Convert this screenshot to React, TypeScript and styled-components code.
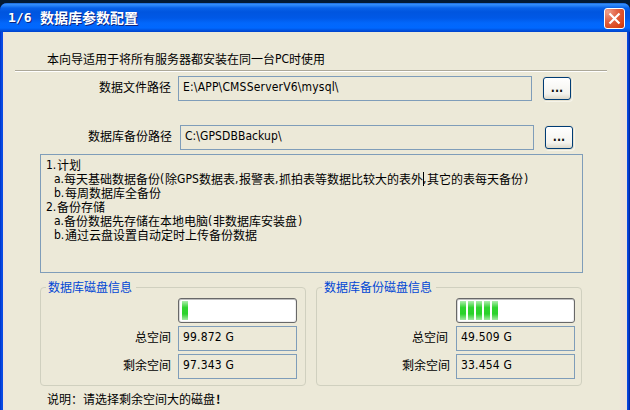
import React from "react";
import styled, { createGlobalStyle } from "styled-components";

const GlobalStyle = createGlobalStyle`
  * { box-sizing: border-box; }
  body { margin: 0; overflow: hidden; background: #031a33; }
`;

const cjk = `"Noto Sans CJK SC", sans-serif`;
const latin = `"DejaVu Sans Condensed", "DejaVu Sans", "Noto Sans CJK SC", sans-serif`;

const Desktop = styled.div`
  width: 630px;
  height: 410px;
  padding-top: 3px;
  background: #031a33;
  overflow: hidden;
`;

const Window = styled.div`
  height: 407px;
  display: flex;
  flex-direction: column;
  border-radius: 7px 7px 0 0;
  overflow: hidden;
  background: linear-gradient(to right, #0030c8 0, #0850e8 2px, #0845e0 3px, #0845e0 628px, #001a90 630px);
`;

const TitleBar = styled.header`
  height: 29px;
  flex: none;
  display: flex;
  align-items: flex-start;
  justify-content: space-between;
  padding: 5px 5px 0 8px;
  background: linear-gradient(
    to bottom,
    #1058c8 0,
    #3791fb 1px,
    #227df5 3px,
    #0761e8 5px,
    #0055df 9px,
    #0058e6 15px,
    #0267fb 20px,
    #0068ff 25px,
    #0054e2 27px,
    #0042cc 29px
  );
`;

const Title = styled.h1`
  margin: 0;
  display: flex;
  font: bold 14px/18px ${cjk};
  color: #fff;
  text-shadow: 1px 1px 0 #0b2480;
  white-space: pre;
`;

const TitleStep = styled.span`
  width: 32px;
  font: bold 13px/19px "DejaVu Sans Mono", monospace;
`;

const CloseButton = styled.button`
  width: 21px;
  height: 21px;
  padding: 0;
  display: flex;
  align-items: center;
  justify-content: center;
  border: 1px solid #fff;
  border-radius: 3px;
  background: radial-gradient(circle at 15% 15%, #efa08c 0, #e26345 40%, #d94418 80%, #b83210 100%);
`;

const Body = styled.main`
  flex: 1;
  margin: 0 3px;
  background: linear-gradient(to right, #efe3da 0, #ece9d8 5px, #ece9d8 616px, #efe1da 620px);
  font: 12px/14px ${cjk};
  color: #000;
`;

const Intro = styled.div`
  height: 39px;
  margin: 0 20px 0 12px;
  padding: 20px 0 0 32px;
  border-bottom: 1px solid #aca899;
  box-shadow: 0 1px 0 #fff;
  white-space: nowrap;
`;

const PathRow = styled.div<{ $indent: number; $top: number }>`
  display: flex;
  height: 25px;
  margin-top: ${(p) => p.$top}px;
  padding-left: ${(p) => p.$indent}px;
`;

const Label = styled.label<{ $width: number; $gap?: number }>`
  flex: none;
  width: ${(p) => p.$width}px;
  margin-right: ${(p) => p.$gap ?? 7}px;
  padding-top: 4px;
  text-align: right;
  white-space: nowrap;
`;

const Field = styled.div<{ $width: number; $spacing?: number }>`
  flex: none;
  width: ${(p) => p.$width}px;
  height: 25px;
  padding: 3px 4px 0;
  border: 1px solid #7f9db9;
  font: 12px/15px ${latin};
  letter-spacing: ${(p) => p.$spacing ?? 0}px;
  white-space: nowrap;
`;

const BrowseButton = styled.button`
  width: 28px;
  height: 23px;
  margin: 1px 0 0 11px;
  padding: 0 0 1px;
  border: 1px solid #003c74;
  border-radius: 3px;
  background: linear-gradient(#fff, #f4f3ee 75%, #dcd8ca);
  box-shadow: 0 0 0 1px #e5e1d0, 1px 1px 0 1px #f6f4ea;
  font: bold 12px/14px ${latin};
  color: #111;
`;

const Plan = styled.div`
  width: 543px;
  height: 119px;
  margin: 4px 0 0 37px;
  padding: 3px 0 0 5px;
  border: 1px solid #7f9db9;
`;

const PlanLine = styled.div<{ $indent?: boolean }>`
  height: 14px;
  padding-left: ${(p) => (p.$indent ? 8 : 0)}px;
  white-space: nowrap;
`;

const Latin = styled.span<{ $width: number }>`
  display: inline-block;
  width: ${(p) => p.$width}px;
  height: 14px;
  vertical-align: top;
  font: 12px/14px ${latin};
`;

const ClosingParen = styled(Latin)`
  padding-left: 1px;
`;

const Caret = styled.span`
  display: inline-block;
  width: 1px;
  height: 14px;
  margin-right: -1px;
  vertical-align: top;
  background: #000;
`;

const Groups = styled.div`
  display: flex;
  gap: 10px;
  margin: 7px 0 0 37px;
`;

const Group = styled.fieldset<{ $inset: number }>`
  width: 266px;
  height: 106px;
  min-width: 0;
  margin: 0;
  padding: 4px ${(p) => p.$inset}px 0 0;
  border: 1px solid #d0d0bf;
  border-radius: 4px;
`;

const Legend = styled.legend`
  height: 14px;
  margin-left: 5px;
  padding: 0 4px 0 2px;
  color: #0046d5;
  white-space: nowrap;
`;

const GroupRow = styled.div`
  display: flex;
  justify-content: flex-end;
  margin-bottom: 3px;
`;

const Progress = styled.div`
  width: 119px;
  height: 25px;
  display: flex;
  gap: 2px;
  padding: 2px 3px;
  border: 1px solid #686868;
  border-radius: 3px;
  background: #fff;
  box-shadow: inset 0 1px 0 #bebebe, inset 1px 0 0 #d8d8d8, inset -1px -1px 0 #efefef;
`;

const Chunk = styled.span`
  width: 6px;
  height: 19px;
  background: linear-gradient(#b0efb0, #2fd32f 35%, #2bd22b 68%, #a4eaa4);
`;

const Note = styled.p`
  margin: 6px 0 0 44px;
  white-space: nowrap;
`;

const Exclamation = styled.b`
  margin-left: 1px;
`;

type DiskProps = {
  title: string;
  chunks: number;
  total: string;
  free: string;
  inset: number;
  gaps: [number, number];
};

function DiskGroup({ title, chunks, total, free, inset, gaps }: DiskProps) {
  return (
    <Group $inset={inset}>
      <Legend>{title}</Legend>
      <GroupRow>
        <Progress>
          {Array.from({ length: chunks }, (_, i) => (
            <Chunk key={i} />
          ))}
        </Progress>
      </GroupRow>
      <GroupRow>
        <Label $width={48} $gap={gaps[0]}>总空间</Label>
        <Field $width={119} $spacing={0.18}>{total}</Field>
      </GroupRow>
      <GroupRow>
        <Label $width={48} $gap={gaps[1]}>剩余空间</Label>
        <Field $width={119} $spacing={0.18}>{free}</Field>
      </GroupRow>
    </Group>
  );
}

export default function App() {
  return (
    <Desktop>
      <GlobalStyle />
      <Window>
        <TitleBar>
          <Title>
            <TitleStep>1/6</TitleStep>
            数据库参数配置
          </Title>
          <CloseButton aria-label="关闭">
            <svg width="13" height="13" viewBox="0 0 13 13">
              <path d="M1.5 1.5 11.5 11.5M11.5 1.5 1.5 11.5" stroke="#fff" strokeWidth="2.2" />
            </svg>
          </CloseButton>
        </TitleBar>
        <Body>
          <Intro>
            本向导适用于将所有服务器都安装在同一台<Latin $width={14}>PC</Latin>时使用
          </Intro>
          <PathRow $indent={84} $top={5}>
            <Label $width={84}>数据文件路径</Label>
            <Field $width={354} $spacing={0.18}>E:\APP\CMSServerV6\mysql\</Field>
            <BrowseButton>...</BrowseButton>
          </PathRow>
          <PathRow $indent={85} $top={24}>
            <Label $width={84} $gap={8}>数据库备份路径</Label>
            <Field $width={354} $spacing={0.08}>C:\GPSDBBackup\</Field>
            <BrowseButton>...</BrowseButton>
          </PathRow>
          <Plan>
            <PlanLine><Latin $width={11}>1.</Latin>计划</PlanLine>
            <PlanLine $indent>
              <Latin $width={10}>a.</Latin>每天基础数据备份<Latin $width={5}>(</Latin>除
              <Latin $width={22}>GPS</Latin>数据表<Latin $width={4}>,</Latin>报警表
              <Latin $width={4}>,</Latin>抓拍表等数据比较大的表外<Caret />
              <Latin $width={4}>,</Latin>其它的表每天备份<ClosingParen $width={6}>)</ClosingParen>
            </PlanLine>
            <PlanLine $indent><Latin $width={11}>b.</Latin>每周数据库全备份</PlanLine>
            <PlanLine><Latin $width={11}>2.</Latin>备份存储</PlanLine>
            <PlanLine $indent>
              <Latin $width={10}>a.</Latin>备份数据先存储在本地电脑<Latin $width={5}>(</Latin>非数据库安装盘
              <ClosingParen $width={6}>)</ClosingParen>
            </PlanLine>
            <PlanLine $indent><Latin $width={11}>b.</Latin>通过云盘设置自动定时上传备份数据</PlanLine>
          </Plan>
          <Groups>
            <DiskGroup title="数据库磁盘信息" chunks={1} total="99.872 G" free="97.343 G" inset={8} gaps={[7, 7]} />
            <DiskGroup title="数据库备份磁盘信息" chunks={5} total="49.509 G" free="33.454 G" inset={6} gaps={[8, 6]} />
          </Groups>
          <Note>说明：请选择剩余空间大的磁盘<Exclamation>!</Exclamation></Note>
        </Body>
      </Window>
    </Desktop>
  );
}
